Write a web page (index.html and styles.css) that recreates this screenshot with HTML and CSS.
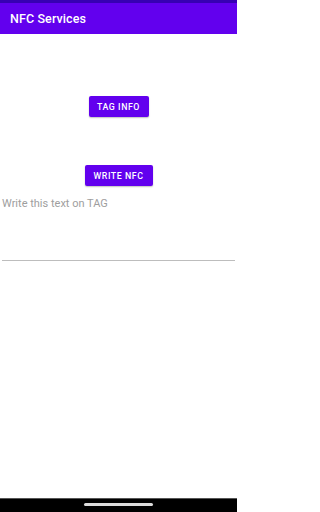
FILE: index.html
```html
<!DOCTYPE html>
<html>
<head>
<meta charset="utf-8">
<link rel="stylesheet" href="styles.css">
</head>
<body>
<div class="screen">
  <div class="status"></div>
  <header class="appbar"><span class="title">NFC Services</span></header>
  <main class="content">
    <button class="btn btn-tag">TAG INFO</button>
    <button class="btn btn-write">WRITE NFC</button>
    <div class="edit">
      <span class="hint">Write this text on TAG</span>
    </div>
  </main>
  <div class="navbar"><div class="pill"></div></div>
</div>
</body>
</html>
```
FILE: styles.css
```css
html, body {
  margin: 0;
  padding: 0;
  background: #fff;
}
.screen {
  width: 237px;
  height: 512px;
  display: flex;
  flex-direction: column;
  font-family: Roboto, "Liberation Sans", sans-serif;
  overflow: hidden;
}
.status {
  height: 3px;
  background: #3700B3;
}
.appbar {
  height: 31px;
  background: #6200EE;
  display: flex;
  align-items: center;
  padding-left: 10px;
}
.title {
  color: #fff;
  font-size: 12.5px;
  font-weight: 500;
  letter-spacing: 0.1px;
}
.content {
  flex: 1;
  display: flex;
  flex-direction: column;
  align-items: center;
}
.btn {
  border: none;
  background: #6200EE;
  color: #fff;
  font-family: Roboto, "Liberation Sans", sans-serif;
  font-weight: 500;
  font-size: 8.8px;
  letter-spacing: 0.55px;
  height: 21px;
  border-radius: 2px;
  padding: 0;
  box-shadow: 0 1px 1.5px rgba(0,0,0,0.25);
}
.btn-tag {
  width: 60px;
  margin-top: 62px;
}
.btn-write {
  width: 68px;
  margin-top: 48px;
}
.edit {
  align-self: stretch;
  margin: 9px 2px 0 2px;
  height: 66px;
  border-bottom: 1px solid #bdbdbd;
  box-sizing: border-box;
}
.hint {
  display: block;
  color: #9e9e9e;
  font-size: 11px;
  line-height: 14px;
  margin-top: 2px;
}
.navbar {
  height: 13px;
  background: #000;
  border-top: 1px solid #555;
  display: flex;
  justify-content: center;
  align-items: flex-start;
}
.pill {
  width: 69px;
  height: 3px;
  margin-top: 4px;
  background: #dcdcdc;
  border-radius: 1.5px;
}
```
